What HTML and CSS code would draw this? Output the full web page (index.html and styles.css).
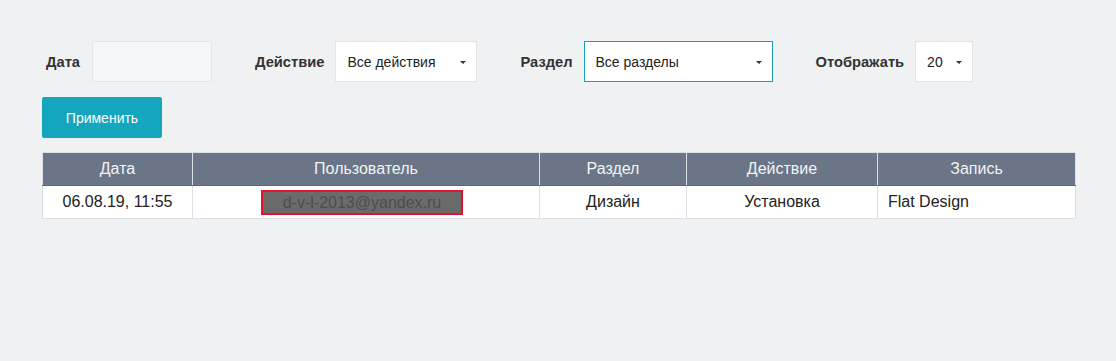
FILE: index.html
```html
<!DOCTYPE html>
<html lang="ru">
<head>
  <meta charset="utf-8">
  <title>Журнал действий</title>
  <link rel="stylesheet" href="styles.css">
</head>
<body>
<div class="log-page">
  <form class="log-filter">
    <div class="log-filter-row">
      <div class="log-field">
        <label class="log-label log-label-date">Дата</label>
        <input class="log-input log-date" type="text">
      </div>
      <div class="log-field">
        <label class="log-label">Действие</label>
        <div class="log-select log-action">Все действия <span class="log-caret"></span></div>
      </div>
      <div class="log-field">
        <label class="log-label">Раздел</label>
        <div class="log-select log-section log-focused">Все разделы <span class="log-caret"></span></div>
      </div>
      <div class="log-field">
        <label class="log-label">Отображать</label>
        <div class="log-select log-count">20 <span class="log-caret"></span></div>
      </div>
    </div>
    <button class="log-apply" type="button">Применить</button>
  </form>

  <table class="log-table">
    <thead>
      <tr>
        <th class="col-date">Дата</th>
        <th class="col-user">Пользователь</th>
        <th class="col-section">Раздел</th>
        <th class="col-action">Действие</th>
        <th class="col-record">Запись</th>
      </tr>
    </thead>
    <tbody>
      <tr>
        <td>06.08.19, 11:55</td>
        <td><span class="log-user-mask">d-v-l-2013@yandex.ru</span></td>
        <td>Дизайн</td>
        <td>Установка</td>
        <td class="log-left">Flat Design</td>
      </tr>
    </tbody>
  </table>
</div>
</body>
</html>
```

FILE: styles.css
```css
body {
  margin: 0;
  background: #f0f1f3;
  font-family: "Liberation Sans", Arial, sans-serif;
  font-size: 14px;
  color: #222;
}
.log-page {
  padding: 41px 41px 0 42px;
}
.log-filter-row {
  display: flex;
  align-items: center;
  height: 41px;
}
.log-field {
  display: flex;
  align-items: center;
  margin-right: 39px;
}
.log-label {
  font-size: 14.7px;
  font-weight: bold;
  color: #333;
  padding-left: 4px;
  margin-right: 11px;
}
.log-label-date {
  margin-right: 12px;
}
.log-input,
.log-select {
  box-sizing: border-box;
  height: 41px;
  border: 1px solid #e3e5e9;
  font: inherit;
}
.log-input {
  width: 120px;
  background: #f5f6f8;
  padding: 0 10px;
}
.log-select {
  display: flex;
  align-items: center;
  justify-content: space-between;
  background: #fff;
  padding: 0 10px 0 11px;
  color: #222;
}
.log-select.log-focused {
  border: 1px solid #12a4bd;
  box-shadow: inset 0 0 0 0 #12a4bd;
}
.log-action { width: 142px; }
.log-section { width: 189px; }
.log-count { width: 58px; }
.log-caret {
  width: 0;
  height: 0;
  border-left: 3px solid transparent;
  border-right: 3px solid transparent;
  border-top: 3px solid #333;
  margin-top: 1px;
}
.log-apply {
  display: block;
  margin-top: 15px;
  width: 120px;
  height: 41px;
  border: none;
  border-radius: 2px;
  background: #14a6bf;
  color: #fff;
  font: inherit;
}
.log-table {
  margin-top: 14px;
  width: 1034px;
  border-collapse: collapse;
  border: 1px solid #dde0e5;
  background: #fff;
  font-size: 16px;
}
.log-table th {
  background: #6a7687;
  color: #f2f3f5;
  font-weight: normal;
  height: 32px;
  padding: 0;
  border: 1px solid #dde0e5;
  border-top: none;
  border-bottom: 1px solid #5d6878;
}
.log-table td {
  height: 32px;
  padding: 0 10px;
  text-align: center;
  border: 1px solid #dde0e5;
}
.log-table td.log-left {
  text-align: left;
}
.col-date { width: 149px; }
.col-user { width: 346px; }
.col-section { width: 146px; }
.col-action { width: 190px; }
.log-user-mask {
  display: inline-block;
  box-sizing: border-box;
  width: 202px;
  height: 25px;
  line-height: 21px;
  margin-left: -8px;
  background: #6b6b6b;
  border: 2px solid #e8112d;
  color: #4d4d4d;
}
```
